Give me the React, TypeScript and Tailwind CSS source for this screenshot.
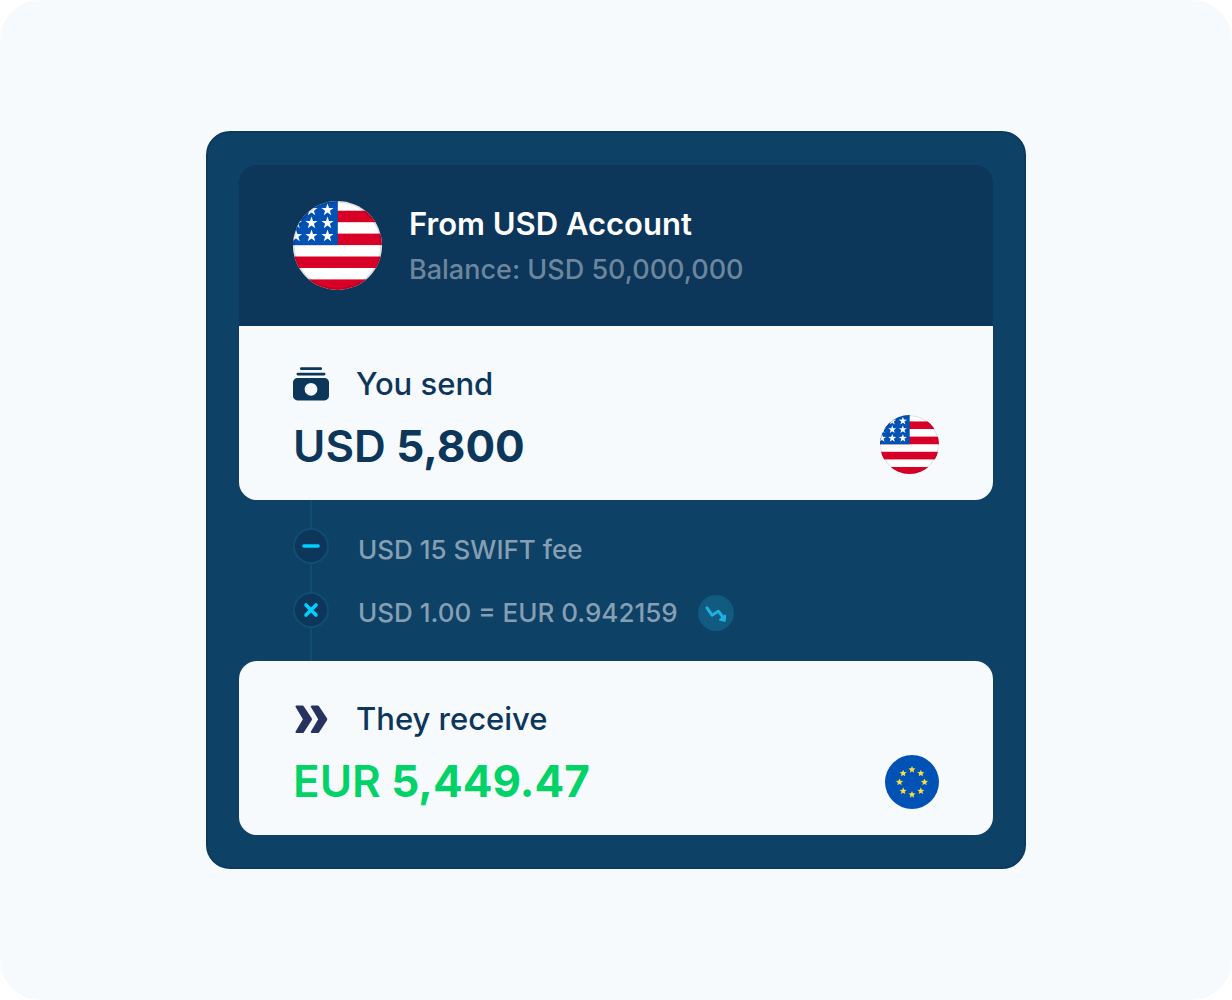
import { useId, type ReactNode } from "react";

function starPoints(cx: number, cy: number, r: number, inner: number) {
  return Array.from({ length: 10 }, (_, i) => {
    const angle = (Math.PI / 5) * i - Math.PI / 2;
    const radius = i % 2 === 0 ? r : r * inner;
    return `${(cx + radius * Math.cos(angle)).toFixed(2)},${(cy + radius * Math.sin(angle)).toFixed(2)}`;
  }).join(" ");
}

const usStars = [
  [18.5, 9], [34.5, 9],
  [3, 22], [18.5, 22], [34.5, 22],
  [3, 35], [18.5, 35], [34.5, 35],
];

function UsFlag({ className }: { className: string }) {
  const clip = useId();
  return (
    <svg viewBox="0 0 89 89" className={className} role="img" aria-label="United States">
      <clipPath id={clip}>
        <circle cx="44.5" cy="44.5" r="44.5" />
      </clipPath>
      <g clipPath={`url(#${clip})`}>
        <rect width="89" height="89" fill="#fff" />
        {[9.7, 32.6, 55.5, 78.4].map((y) => (
          <rect key={y} y={y} width="89" height="11.5" fill="#d80027" />
        ))}
        <rect width="44.8" height="44.1" fill="#0052b4" />
        {usStars.map(([x, y]) => (
          <polygon key={`${x}-${y}`} points={starPoints(x, y, 6.4, 0.4)} fill="#fff" />
        ))}
        <circle cx="44.5" cy="44.5" r="43.6" fill="none" stroke="#000" strokeOpacity="0.12" strokeWidth="1.8" />
      </g>
    </svg>
  );
}

function EuFlag({ className }: { className: string }) {
  return (
    <svg viewBox="0 0 54 54" className={className} role="img" aria-label="European Union">
      <circle cx="27" cy="27" r="27" fill="#0052b4" />
      {Array.from({ length: 8 }, (_, i) => {
        const a = (Math.PI / 4) * i;
        return <polygon key={i} points={starPoints(27 + 12.5 * Math.cos(a), 27.2 + 12.5 * Math.sin(a), 3.7, 0.45)} fill="#ffda44" />;
      })}
    </svg>
  );
}

function CashIcon() {
  return (
    <svg viewBox="0 0 36 36" className="size-9" fill="#0c365a" aria-hidden="true">
      <rect x="7" y="1.3" width="22" height="2.7" rx="1.3" />
      <rect x="3.5" y="6.7" width="29" height="2.8" rx="1.4" />
      <path
        fillRule="evenodd"
        d="M4.5 12h27a4.5 4.5 0 0 1 4.5 4.5v13.4a4.5 4.5 0 0 1-4.5 4.5h-27A4.5 4.5 0 0 1 0 29.9v-13.4A4.5 4.5 0 0 1 4.5 12ZM18 16.9a6.4 6.4 0 1 0 0 12.8a6.4 6.4 0 0 0 0-12.8Z"
      />
    </svg>
  );
}

function ChevronsIcon() {
  const chevron =
    "M3.5 4.5H9.3Q10.3 4.5 10.9 5.4L18.7 17.3Q19.3 18.3 18.7 19.3L10.9 31.2Q10.3 32.1 9.3 32.1H3.5Q1.9 31.9 2.6 30.5L9.9 18.3L2.6 6.1Q1.9 4.7 3.5 4.5Z";
  return (
    <svg viewBox="0 0 36 36" className="size-9" fill="#26335f" aria-hidden="true">
      <path d={chevron} />
      <path d={chevron} transform="translate(15.3 0)" />
    </svg>
  );
}

function StepIcon({ children }: { children: ReactNode }) {
  return (
    <div className="flex size-9 items-center justify-center rounded-full border-2 border-[#104d74] bg-[#0c365a]">
      <svg viewBox="0 0 32 32" className="size-8" fill="none" stroke="#00cfff" strokeWidth="3.6" strokeLinecap="round" aria-hidden="true">
        {children}
      </svg>
    </div>
  );
}

function TrendDownIcon() {
  return (
    <svg viewBox="0 0 36 36" className="size-9" aria-hidden="true">
      <circle cx="18" cy="18" r="18" fill="#115a80" />
      <path d="M9 12.8L14 20.2L20.4 16.2L24.8 22" fill="none" stroke="#1eb0e0" strokeWidth="3" strokeLinecap="round" strokeLinejoin="round" />
      <path d="M27.2 20.6L26.8 25.800L22 24.700Z" fill="#1eb0e0" stroke="#1eb0e0" strokeWidth="2" strokeLinejoin="round" />
    </svg>
  );
}

type AmountProps = { icon: ReactNode; label: string; currency: string; value: string; color: string; flag: ReactNode; shape: string };

function AmountPanel({ icon, label, currency, value, color, flag, shape }: AmountProps) {
  return (
    <section className={`flex items-end justify-between bg-[#f7fafd] px-[54px] pt-9 pb-[26px] ${shape}`}>
      <div className="flex flex-col gap-3">
        <h3 className="flex items-center gap-[27px] text-[31px] leading-[44px] font-medium text-[#0c365a]">
          {icon}
          {label}
        </h3>
        <p className={`text-[44px] leading-[56px] font-bold ${color}`}>
          <span className="font-semibold">{currency}</span> {value}
        </p>
      </div>
      {flag}
    </section>
  );
}

export default function App() {
  return (
    <main className="flex min-h-screen items-center justify-center rounded-[40px] bg-[#f7fafd] font-['Inter',sans-serif]">
      <article className="w-full max-w-[820px] rounded-3xl border-2 border-[#0c3a5f] bg-[#0e4166] px-[31px] py-8">
        <header className="flex items-center gap-[27px] rounded-t-[18px] bg-[#0c365a] px-[54px] py-9">
          <UsFlag className="size-[89px]" />
          <div className="flex flex-col gap-1">
            <h2 className="text-[31px] leading-[44px] font-semibold text-white">From USD Account</h2>
            <p className="text-[27px] leading-[40px] font-medium text-[#6d869c]">Balance: USD 50,000,000</p>
          </div>
        </header>
        <AmountPanel
          icon={<CashIcon />}
          label="You send"
          currency="USD"
          value="5,800"
          color="text-[#0c365a]"
          flag={<UsFlag className="size-[59px]" />}
          shape="rounded-b-[18px]"
        />
        <div className="flex gap-[29px] px-[54px]">
          <div className="flex flex-col items-center">
            <div className="h-7 w-0.5 bg-[#104d74]" />
            <StepIcon>
              <path d="M9 16H23" />
            </StepIcon>
            <div className="h-7 w-0.5 bg-[#104d74]" />
            <StepIcon>
              <path d="M11 11L21 21M21 11L11 21" />
            </StepIcon>
            <div className="w-0.5 grow bg-[#104d74]" />
          </div>
          <ul className="flex flex-col gap-[27px] pt-8 pb-[30px] text-[26px] leading-9 font-medium text-[#869fb2]">
            <li>USD 15 SWIFT fee</li>
            <li className="flex items-center gap-5">
              USD 1.00 = EUR 0.942159
              <TrendDownIcon />
            </li>
          </ul>
        </div>
        <AmountPanel
          icon={<ChevronsIcon />}
          label="They receive"
          currency="EUR"
          value="5,449.47"
          color="text-[#03d268]"
          flag={<EuFlag className="size-[54px]" />}
          shape="rounded-[18px]"
        />
      </article>
    </main>
  );
}
